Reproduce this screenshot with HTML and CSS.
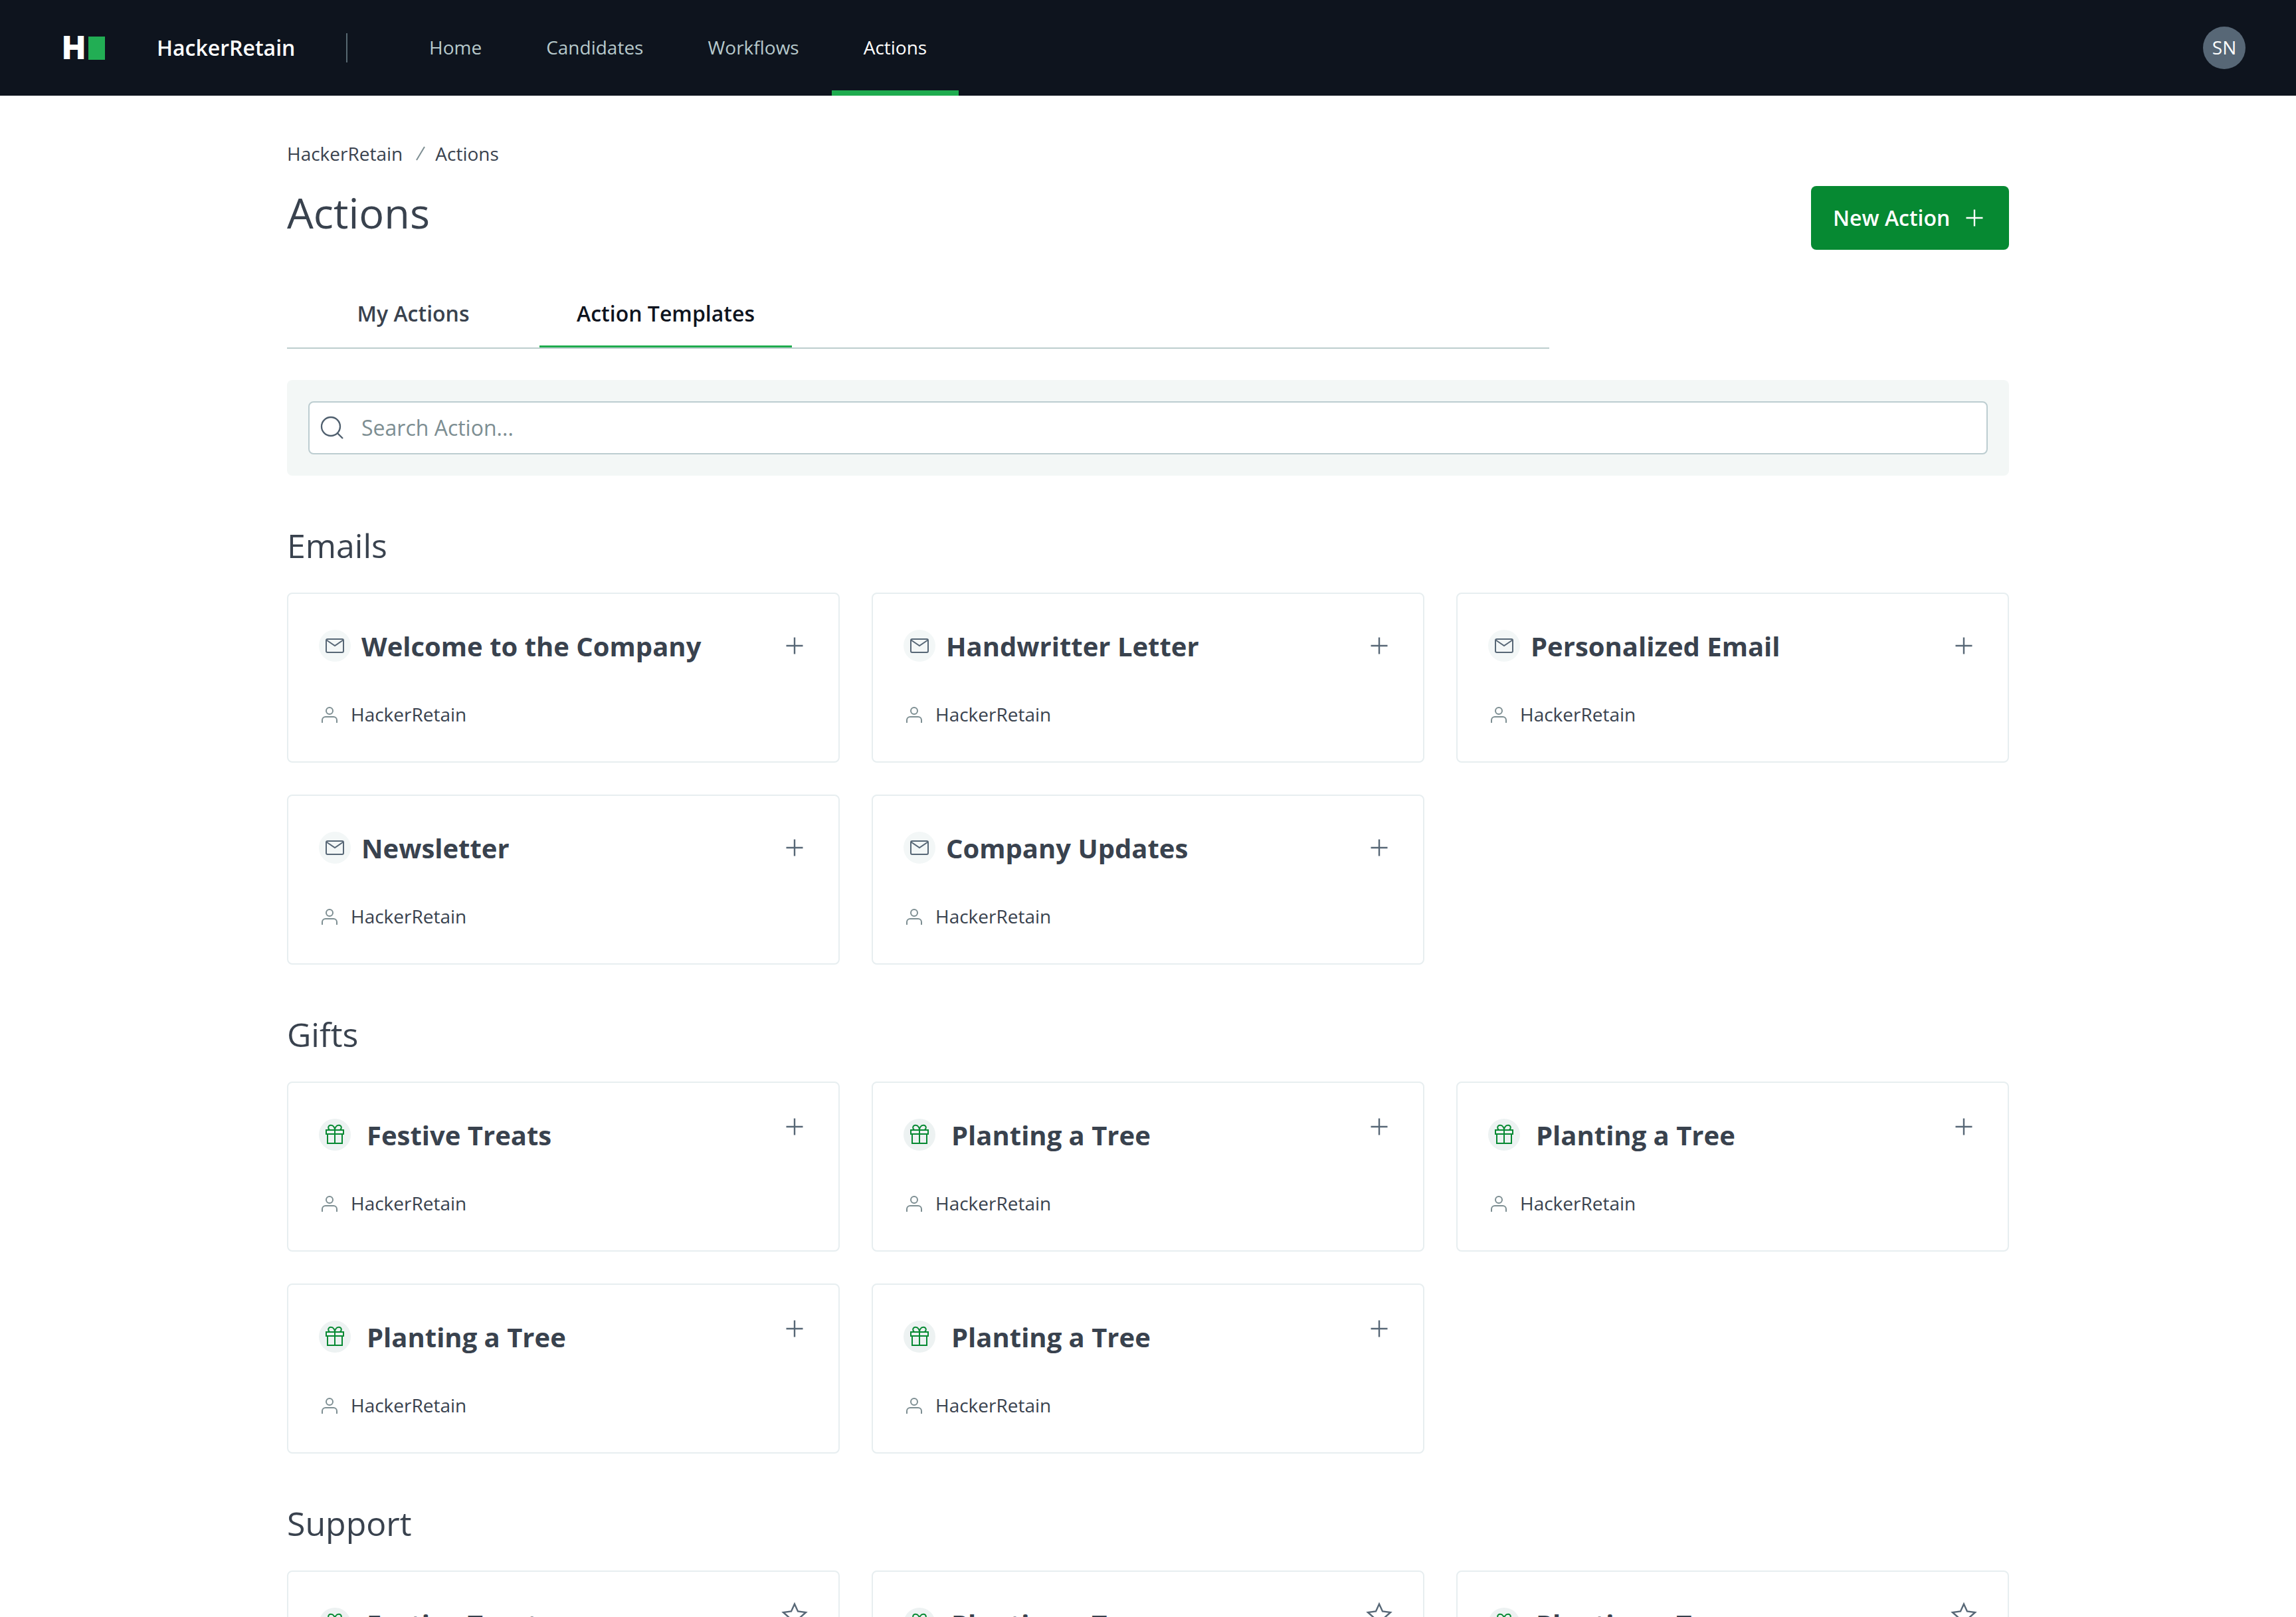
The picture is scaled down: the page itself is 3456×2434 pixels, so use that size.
FILE: index.html
```html
<!DOCTYPE html>
<html lang="en">
<head>
  <meta charset="UTF-8" />
  <meta name="viewport" content="width=device-width, initial-scale=1.0"/>
  <title>Actions | HackerRetain</title>
  <link rel="stylesheet" href="styles.css">
</head>
<body>
  <!-- Shared icons -->
  <svg class="sprite">
    <symbol id="plus" viewBox="0 0 32 32"><path d="M16 3.500v25M3.500 16h25"/></symbol>
    <symbol id="mail" viewBox="0 0 48 48"><rect x="11" y="14" width="26" height="20" rx="2"/><path d="M11.5 15.5L24 24l12.500-8.500"/></symbol>
    <symbol id="gift" viewBox="0 0 48 48"><path d="M11 17h26v6H11zM13 23h22v14H13zM24 17v20M24 17h-5.500a3.700 3.700 0 1 1 0-7.300c3.500 0 5.500 4.300 5.500 7.300zM24 17h5.500a3.700 3.700 0 1 0 0-7.300c-3.500 0-5.500 4.300-5.500 7.300z"/></symbol>
    <symbol id="user" viewBox="0 0 24 24"><circle cx="12" cy="6" r="5"/><path d="M1 24v-4a5 5 0 0 1 5-5h12a5 5 0 0 1 5 5v4"/></symbol>
    <symbol id="star" viewBox="0 0 40 40"><path d="M20 3.500l5 11 12 1.500-9 8 2.500 12L20 30l-10.500 6L12 24l-9-8 12-1.500z"/></symbol>
    <symbol id="search" viewBox="0 0 36 36"><circle cx="16" cy="16" r="14"/><path d="M26 26l8 8"/></symbol>
  </svg>

  <header class="navbar">
    <div class="logo"><span class="logo-letter">H</span><span class="logo-block"></span></div>
    <div class="brand">HackerRetain</div>
    <div class="divider"></div>
    <nav class="nav-links">
      <a>Home</a>
      <a>Candidates</a>
      <a>Workflows</a>
      <a class="active">Actions</a>
    </nav>
    <div class="avatar">SN</div>
  </header>

  <main class="container">
    <div class="breadcrumb">
      <span>HackerRetain</span>
      <svg class="slash" viewBox="0 0 14 22"><path d="M13 1L1 21"/></svg>
      <span>Actions</span>
    </div>

    <div class="page-header">
      <h1>Actions</h1>
      <button class="new-action">New Action <svg class="icon-plus"><use href="#plus"/></svg></button>
    </div>

    <div class="tabs">
      <div class="tab">My Actions</div>
      <div class="tab active">Action Templates</div>
    </div>

    <div class="search-panel">
      <div class="search-box">
        <svg class="icon-search"><use href="#search"/></svg>
        <span>Search Action...</span>
      </div>
    </div>

    <section>
      <h2>Emails</h2>
      <div class="card-grid">
        <div class="card">
          <div class="card-top"><svg class="badge"><use href="#mail"/></svg><h3>Welcome to the Company</h3><svg class="icon-plus"><use href="#plus"/></svg></div>
          <div class="card-owner"><svg class="icon-user"><use href="#user"/></svg><span>HackerRetain</span></div>
        </div>
        <div class="card">
          <div class="card-top"><svg class="badge"><use href="#mail"/></svg><h3>Handwritter Letter</h3><svg class="icon-plus"><use href="#plus"/></svg></div>
          <div class="card-owner"><svg class="icon-user"><use href="#user"/></svg><span>HackerRetain</span></div>
        </div>
        <div class="card">
          <div class="card-top"><svg class="badge"><use href="#mail"/></svg><h3>Personalized Email</h3><svg class="icon-plus"><use href="#plus"/></svg></div>
          <div class="card-owner"><svg class="icon-user"><use href="#user"/></svg><span>HackerRetain</span></div>
        </div>
        <div class="card">
          <div class="card-top"><svg class="badge"><use href="#mail"/></svg><h3>Newsletter</h3><svg class="icon-plus"><use href="#plus"/></svg></div>
          <div class="card-owner"><svg class="icon-user"><use href="#user"/></svg><span>HackerRetain</span></div>
        </div>
        <div class="card">
          <div class="card-top"><svg class="badge"><use href="#mail"/></svg><h3>Company Updates</h3><svg class="icon-plus"><use href="#plus"/></svg></div>
          <div class="card-owner"><svg class="icon-user"><use href="#user"/></svg><span>HackerRetain</span></div>
        </div>
      </div>
    </section>

    <section>
      <h2>Gifts</h2>
      <div class="card-grid gifts">
        <div class="card">
          <div class="card-top"><svg class="badge"><use href="#gift"/></svg><h3>Festive Treats</h3><svg class="icon-plus"><use href="#plus"/></svg></div>
          <div class="card-owner"><svg class="icon-user"><use href="#user"/></svg><span>HackerRetain</span></div>
        </div>
        <div class="card">
          <div class="card-top"><svg class="badge"><use href="#gift"/></svg><h3>Planting a Tree</h3><svg class="icon-plus"><use href="#plus"/></svg></div>
          <div class="card-owner"><svg class="icon-user"><use href="#user"/></svg><span>HackerRetain</span></div>
        </div>
        <div class="card">
          <div class="card-top"><svg class="badge"><use href="#gift"/></svg><h3>Planting a Tree</h3><svg class="icon-plus"><use href="#plus"/></svg></div>
          <div class="card-owner"><svg class="icon-user"><use href="#user"/></svg><span>HackerRetain</span></div>
        </div>
        <div class="card">
          <div class="card-top"><svg class="badge"><use href="#gift"/></svg><h3>Planting a Tree</h3><svg class="icon-plus"><use href="#plus"/></svg></div>
          <div class="card-owner"><svg class="icon-user"><use href="#user"/></svg><span>HackerRetain</span></div>
        </div>
        <div class="card">
          <div class="card-top"><svg class="badge"><use href="#gift"/></svg><h3>Planting a Tree</h3><svg class="icon-plus"><use href="#plus"/></svg></div>
          <div class="card-owner"><svg class="icon-user"><use href="#user"/></svg><span>HackerRetain</span></div>
        </div>
      </div>
    </section>

    <section>
      <h2>Support</h2>
      <div class="card-grid gifts">
        <div class="card">
          <div class="card-top"><svg class="badge"><use href="#gift"/></svg><h3>Festive Treats</h3><svg class="icon-star"><use href="#star"/></svg></div>
        </div>
        <div class="card">
          <div class="card-top"><svg class="badge"><use href="#gift"/></svg><h3>Planting a Tree</h3><svg class="icon-star"><use href="#star"/></svg></div>
        </div>
        <div class="card">
          <div class="card-top"><svg class="badge"><use href="#gift"/></svg><h3>Planting a Tree</h3><svg class="icon-star"><use href="#star"/></svg></div>
        </div>
      </div>
    </section>
  </main>
</body>
</html>
```
FILE: styles.css
```css
* {
  box-sizing: border-box;
}

body {
  margin: 0;
  height: 2434px;
  overflow: hidden;
  background-color: #fff;
  color: #39424e;
  font-family: 'Open Sans', 'Noto Sans', sans-serif;
  font-size: 28px;
}

h1, h2, h3 {
  margin: 0;
}

svg {
  flex: none;
  fill: none;
  stroke: currentColor;
  stroke-width: 2;
}

.sprite {
  display: none;
}

/* Top navigation */
.navbar {
  display: flex;
  align-items: center;
  height: 144px;
  padding: 0 76px 0 96px;
  background-color: #0e141e;
  color: #fff;
}

.logo {
  display: flex;
  align-items: center;
  gap: 5px;
  width: 140px;
}

.logo-letter {
  width: 34px;
  margin-left: -2px;
  font-family: 'Inter', sans-serif;
  font-size: 48px;
  font-weight: 900;
  line-height: 48px;
  transform: scaleX(0.95);
  transform-origin: left;
}

.logo-block {
  width: 25px;
  height: 35px;
  background-color: #22ae54;
}

.brand {
  width: 285px;
  padding-bottom: 2px;
  font-size: 32px;
  font-weight: 600;
}

.divider {
  width: 2px;
  height: 44px;
  background-color: #576871;
}

.nav-links {
  display: flex;
  gap: 1px;
  height: 144px;
  margin-left: 75px;
}

.nav-links a {
  padding: 0 48px;
  line-height: 142px;
  color: #b7c9cc;
}

.nav-links .active {
  color: #fff;
  box-shadow: inset 0 -8px #1fac4f;
}

.avatar {
  width: 64px;
  height: 64px;
  margin-left: auto;
  border-radius: 50%;
  background-color: #576776;
  line-height: 62px;
  text-align: center;
}

/* Page header */
.container {
  width: 2592px;
  margin: 0 auto;
  padding-top: 66px;
}

.breadcrumb {
  display: flex;
  align-items: center;
  height: 42px;
}

.slash {
  width: 14px;
  height: 22px;
  margin: 0 15px 0 20px;
  color: #7d8e92;
}

.page-header {
  display: flex;
  justify-content: space-between;
  align-items: flex-start;
  margin-top: 28px;
}

h1 {
  font-size: 63px;
  font-weight: 400;
  line-height: 80px;
}

.new-action {
  display: flex;
  align-items: center;
  justify-content: space-between;
  width: 298px;
  height: 96px;
  padding: 0 36px 2px 33px;
  border: none;
  border-radius: 8px;
  background-color: #068932;
  color: #fff;
  font-family: inherit;
  font-size: 32px;
  font-weight: 600;
}

.new-action .icon-plus {
  margin-top: 2px;
}

.tabs {
  display: flex;
  width: 1900px;
  margin-top: 48px;
  border-bottom: 2px solid #bccdcd;
}

.tab {
  width: 380px;
  border-bottom: 3px solid transparent;
  font-size: 32px;
  font-weight: 600;
  line-height: 96px;
  text-align: center;
}

.tab.active {
  border-color: #1fac4f;
  color: #0e141e;
}

/* Search */
.search-panel {
  margin-top: 47px;
  padding: 32px;
  border-radius: 8px;
  background-color: #f3f7f6;
}

.search-box {
  display: flex;
  align-items: center;
  gap: 26px;
  height: 80px;
  padding-left: 16px;
  border: 2px solid #bccdd0;
  border-radius: 8px;
  background-color: #fff;
  color: #7d8e92;
  font-size: 32px;
}

.search-box span {
  padding-bottom: 2px;
}

.icon-search {
  width: 36px;
  height: 36px;
  color: #4f5f6e;
  stroke-width: 2.3;
}

/* Cards */
section {
  padding-top: 73px;
}

h2 {
  margin-bottom: 39px;
  font-size: 50px;
  font-weight: 400;
  line-height: 64px;
}

.card-grid {
  display: grid;
  grid-template-columns: repeat(3, 1fr);
  gap: 48px;
}

.card {
  height: 256px;
  padding: 54px 50px 0 46px;
  border: 2px solid #e7eef0;
  border-radius: 8px;
}

.card-top {
  display: flex;
  align-items: center;
  height: 48px;
}

.badge {
  width: 48px;
  height: 48px;
  border-radius: 50%;
  background-color: #f3f7f7;
  color: #576776;
}

h3 {
  flex: 1;
  margin-left: 16px;
  font-size: 40px;
  font-weight: 700;
}

.icon-plus {
  width: 32px;
  height: 32px;
  stroke-width: 2.4;
}

.card .icon-plus,
.card .icon-star {
  color: #576776;
}

.icon-star {
  width: 40px;
  height: 40px;
  margin-right: -4px;
  stroke-width: 2.4;
}

.gifts .badge {
  background-color: #edf2f2;
  color: #068932;
}

.gifts h3 {
  margin-left: 24px;
}

/* gift actions sit above the title line */
.gifts .icon-plus {
  margin-bottom: 24px;
}

.gifts .icon-star {
  margin-bottom: 26px;
}

.card-owner {
  display: flex;
  align-items: center;
  gap: 20px;
  height: 40px;
  margin: 60px 0 0 4px;
}

.card-owner span {
  padding-bottom: 2px;
}

.icon-user {
  width: 24px;
  height: 24px;
  color: #7d8e92;
}
```
